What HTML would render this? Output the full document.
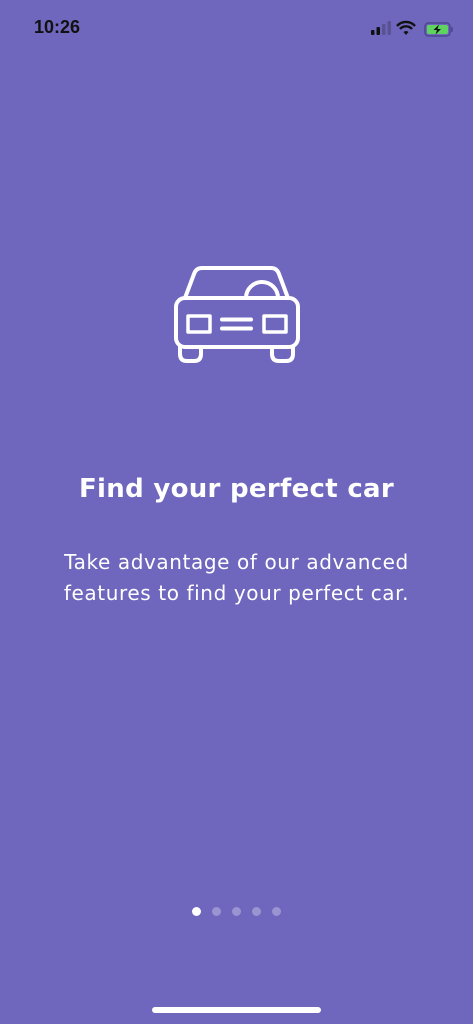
<!DOCTYPE html>
<html><head><meta charset="utf-8"><style>
html,body{margin:0;padding:0}
body{width:473px;height:1024px;background:#6f66bd;position:relative;overflow:hidden;font-family:"Liberation Sans",sans-serif;color:#fff}
.time{position:absolute;left:34px;top:17px;font-size:18px;font-weight:bold;color:#111}
h1{position:absolute;top:474px;left:0;width:473px;text-align:center;margin:0;font-family:"DejaVu Sans",sans-serif;font-size:26px;font-weight:bold;letter-spacing:0.3px}
p{position:absolute;top:547px;left:0;width:473px;text-align:center;margin:0;font-family:"DejaVu Sans",sans-serif;font-size:20px;line-height:31px;letter-spacing:0.6px}
.dot{position:absolute;top:907px;width:9px;height:9px;border-radius:50%;background:rgba(255,255,255,.3)}
.home{position:absolute;left:152px;top:1007px;width:169px;height:6px;border-radius:3px;background:#fff}
</style></head><body>
<div class="time">10:26</div>
<svg style="position:absolute;left:368px;top:18px" width="95" height="20" viewBox="0 0 95 20">
<rect x="3" y="12" width="3.5" height="5" rx="1" fill="#111"/>
<rect x="8.5" y="9" width="3.5" height="8" rx="1" fill="#111"/>
<rect x="14" y="6" width="3.5" height="11" rx="1" fill="#5a5393"/>
<rect x="19.5" y="3" width="3.5" height="14" rx="1" fill="#5a5393"/>
<path d="M29 8 A12 12 0 0 1 47 8" stroke="#111" stroke-width="2.4" fill="none"/>
<path d="M32 11 A8 8 0 0 1 44 11" stroke="#111" stroke-width="2.4" fill="none"/>
<path d="M35.5 14 L38 17 L40.5 14 A4 4 0 0 0 35.5 14Z" fill="#111"/>
<rect x="57" y="5" width="25" height="13" rx="3.5" fill="none" stroke="#4d4790" stroke-width="1.5"/>
<rect x="59" y="7" width="21" height="9" rx="2" fill="#5ed35f"/>
<rect x="83" y="9" width="1.8" height="5" rx="1" fill="#4d4790"/>
<path d="M71 6.5 L65.5 12 L69 12 L67.5 16.5 L73 11 L69.5 11Z" fill="#111"/>
</svg>
<svg style="position:absolute;left:160px;top:255px" width="150" height="120" viewBox="160 255 150 120" fill="none" stroke="#fff" stroke-width="4" stroke-linejoin="round" stroke-linecap="round">
<path d="M185 298 L194 274 Q196 268 202 268 L271 268 Q277 268 279 274 L288 298"/>
<rect x="176" y="298" width="122" height="49" rx="9"/>
<path d="M180 347 L180 354 Q180 361 187 361 L194 361 Q201 361 201 354 L201 347"/>
<path d="M272 347 L272 354 Q272 361 279 361 L286 361 Q293 361 293 354 L293 347"/>
<rect x="188" y="316" width="22" height="16" stroke-width="3.5"/>
<rect x="264" y="316" width="22" height="16" stroke-width="3.5"/>
<path d="M222 319.5 H251 M222 328.5 H251"/>
<path d="M246 298 A16 16 0 0 1 278 298"/>
</svg>
<h1>Find your perfect car</h1>
<p>Take advantage of our advanced<br>features to find your perfect car.</p>
<div class="dot" style="left:192px;background:#fff"></div>
<div class="dot" style="left:212px"></div>
<div class="dot" style="left:232px"></div>
<div class="dot" style="left:252px"></div>
<div class="dot" style="left:272px"></div>
<div class="home"></div>
</body></html>
